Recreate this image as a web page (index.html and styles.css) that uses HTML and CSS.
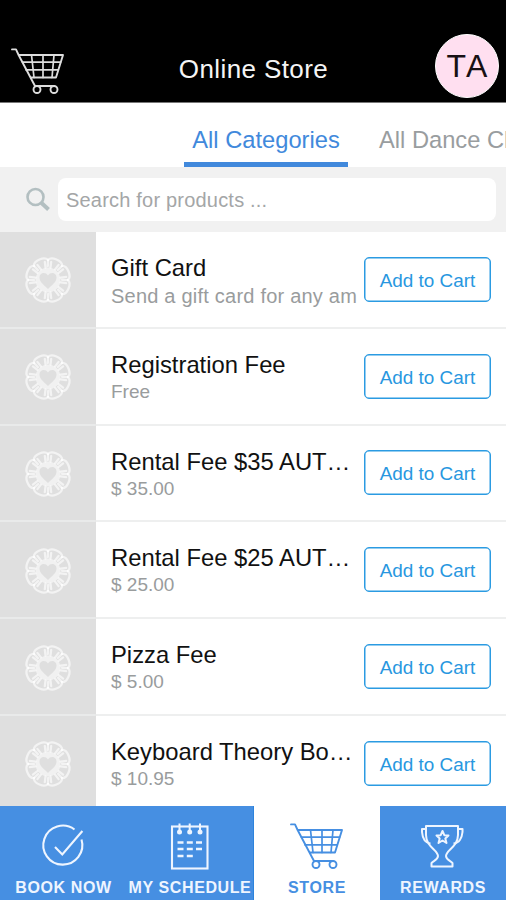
FILE: index.html
```
<!DOCTYPE html>
<html lang="en">
<head>
<meta charset="utf-8">
<title>Online Store</title>
<link rel="stylesheet" href="styles.css">
</head>
<body>
<svg class="defs" width="0" height="0">
  <defs>
    <g id="cart" fill="none" stroke="currentColor" stroke-linecap="round" stroke-linejoin="round">
      <path stroke-width="1.9" d="M1 1.4H5L7.6 7H52L45 29.5H20M7.6 7L24 38H43"/>
      <path stroke-width="1.7" d="M11.5 14.2H49.5M15 21.8H47M20.5 7L23 29.5M32 7V29.5M43 7L41 29.5"/>
      <circle cx="26" cy="41.500" r="3.5" stroke-width="1.9"/>
      <circle cx="43" cy="41.500" r="3.5" stroke-width="1.9"/>
    </g>
    <g id="petal">
      <path d="M-7.6 -18.4C-6 -23.500 6 -23.500 7.600 -18.400"/>
      <path d="M-2.500 -12.500L-4 -18M2.500 -12.500L4 -18M7.400 -17.800L5.200 -13"/>
    </g>
    <g id="rosette" fill="none" stroke="#fff" stroke-width="2.3" stroke-opacity=".62" stroke-linecap="round">
      <g transform="rotate(22.5)"><use href="#petal"/><use href="#petal" transform="rotate(45)"/><use href="#petal" transform="rotate(90)"/><use href="#petal" transform="rotate(135)"/><use href="#petal" transform="rotate(180)"/><use href="#petal" transform="rotate(225)"/><use href="#petal" transform="rotate(270)"/><use href="#petal" transform="rotate(315)"/></g>
      <path fill="#fff" fill-opacity=".55" fill-rule="evenodd" stroke="none" d="M0 -12.500A12.500 12.500 0 1 0 0 12.500A12.500 12.500 0 1 0 0 -12.500ZM0 9C-3 5.500 -8.500 2.500 -8.500 -2.500C-8.500 -7.500 -2.500 -8.500 0 -4.500C2.500 -8.500 8.500 -7.500 8.500 -2.500C8.500 2.500 3 5.500 0 9Z"/>
    </g>
  </defs>
</svg>
<div class="app">
  <header class="header">
    <svg class="header-cart" width="54" height="46"><use href="#cart"/></svg>
    <h1 class="title">Online Store</h1>
    <div class="avatar">TA</div>
  </header>
  <nav class="tabs">
    <a class="tab tab-active">All Categories</a>
    <a class="tab tab-next">All Dance Cl</a>
  </nav>
  <div class="search">
    <svg class="search-icon" width="26" height="26" fill="none" stroke="#b3bfc1"><circle cx="10.5" cy="10" r="8" stroke-width="2.6"/><path d="M16 15.5L23.5 22.5" stroke-width="4"/></svg>
    <div class="field">Search for products ...</div>
  </div>
  <main class="list">
    <article class="row"><div class="thumb"><svg width="50" height="50" viewBox="-25 -25 50 50"><use href="#rosette"/></svg></div><div class="info"><h2 class="name">Gift Card</h2><p class="sub desc">Send a gift card for any am</p></div><button class="add">Add to Cart</button></article>
    <article class="row"><div class="thumb"><svg width="50" height="50" viewBox="-25 -25 50 50"><use href="#rosette"/></svg></div><div class="info"><h2 class="name">Registration Fee</h2><p class="sub">Free</p></div><button class="add">Add to Cart</button></article>
    <article class="row"><div class="thumb"><svg width="50" height="50" viewBox="-25 -25 50 50"><use href="#rosette"/></svg></div><div class="info"><h2 class="name">Rental Fee $35 AUT…</h2><p class="sub">$ 35.00</p></div><button class="add">Add to Cart</button></article>
    <article class="row"><div class="thumb"><svg width="50" height="50" viewBox="-25 -25 50 50"><use href="#rosette"/></svg></div><div class="info"><h2 class="name">Rental Fee $25 AUT…</h2><p class="sub">$ 25.00</p></div><button class="add">Add to Cart</button></article>
    <article class="row"><div class="thumb"><svg width="50" height="50" viewBox="-25 -25 50 50"><use href="#rosette"/></svg></div><div class="info"><h2 class="name">Pizza Fee</h2><p class="sub">$ 5.00</p></div><button class="add">Add to Cart</button></article>
    <article class="row"><div class="thumb"><svg width="50" height="50" viewBox="-25 -25 50 50"><use href="#rosette"/></svg></div><div class="info"><h2 class="name">Keyboard Theory Bo…</h2><p class="sub">$ 10.95</p></div><button class="add">Add to Cart</button></article>
  </main>
  <footer class="bar">
    <a class="item"><svg class="icon" width="54" height="48" fill="none" stroke="currentColor" stroke-width="2.1"><path d="M37.500 7.500A19.500 19.500 0 1 0 44.500 17.500M18 25L25.300 32.500L45.400 9"/></svg><span class="label">BOOK NOW</span></a>
    <a class="item item-schedule"><svg class="icon" width="54" height="48" fill="none" stroke="currentColor"><rect x="9" y="4.500" width="35.5" height="42" stroke-width="2.100"/><path stroke-width="2" d="M16.500 1.500V10M26.700 1.500V10M37 1.500V10"/><g fill="currentColor" stroke="none"><circle cx="16.500" cy="10" r="2.5"/><circle cx="26.700" cy="10" r="2.5"/><circle cx="37" cy="10" r="2.5"/></g><path stroke-width="2.4" d="M14.500 20.500H20.500M23.800 20.500H29.800M33 20.500H39M14.500 27H20.500M23.800 27H29.800M33 27H39M14.500 34H20.500M23.800 34H29.800"/></svg><span class="label">MY SCHEDULE</span></a>
    <a class="item item-active"><svg class="icon" width="54" height="48" viewBox="0 -1 54 48"><use href="#cart"/></svg><span class="label">STORE</span></a>
    <a class="item"><svg class="icon" width="54" height="48" fill="none" stroke="currentColor" stroke-width="2" stroke-linejoin="round"><path d="M10 4H42V13C42 25 30 28 30 34C30 38 35 39 36.500 41V44.500H15.500V41C17 39 22 38 22 34C22 28 10 25 10 13Z"/><path d="M10 7H6V10C6.500 16 9 21 14.500 21.500M42 7H46.500V10C46 16 43 21 37.500 21.500"/><path d="M26.500 9L28.300 13.200L32.500 13.500L29.300 16.500L30.500 21L26.500 18.500L22.500 21L23.700 16.500L20.500 13.500L24.700 13.200Z"/></svg><span class="label">REWARDS</span></a>
  </footer>
</div>
</body>
</html>
```
FILE: styles.css
```
* { box-sizing: border-box; }
body { margin: 0; background: #fff; font-family: "Liberation Sans", Arial, sans-serif; }
.defs { position: absolute; }
.app { width: 506px; height: 900px; overflow: hidden; display: flex; flex-direction: column; }
.header { flex: none; height: 103px; background: #000; color: #f5f5f5; border-bottom: 1px solid #777; display: grid; grid-template-columns: 100px 1fr 100px; padding: 34px 7px 0 11px; }
.header-cart { margin-top: 14px; color: #ddd; }
.title { margin: 20px 3px 0 0; font-size: 26px; line-height: 30px; font-weight: 400; letter-spacing: .4px; text-align: center; white-space: nowrap; }
.avatar { justify-self: end; width: 64px; height: 64px; border: 1px solid #fff; border-radius: 50%; background: #ffdff0; color: #181014; font-size: 32px; line-height: 63px; text-align: center; font-kerning: none; }
.tabs { flex: none; height: 64px; display: flex; padding-left: 184px; overflow: hidden; }
.tab { flex: none; font-size: 23.7px; line-height: 28px; padding-top: 23px; white-space: nowrap; color: #999d9f; }
.tab-active { width: 164px; text-align: center; color: #4189dc; border-bottom: 5px solid #4189dc; }
.tab-next { margin-left: 31px; }
.search { flex: none; height: 65px; background: #f1f1f1; display: flex; align-items: flex-start; padding: 11px 10px 0 25px; }
.search-icon { flex: none; margin: 9px 7px 0 0; }
.field { flex: 1; height: 43px; border-radius: 8px; background: #fff; color: #a4a6a7; font-size: 20px; line-height: 44px; padding-left: 8px; letter-spacing: .2px; }
.list { flex: 1; min-height: 0; overflow: hidden; }
.row { height: 96.8px; display: flex; align-items: stretch; background: linear-gradient(#eeefef, #eeefef) bottom / 100% 2px no-repeat; }
.thumb { flex: none; width: 95.5px; background: linear-gradient(#e9eaea, #e9eaea) bottom / 100% 2px no-repeat #dfdfdf; display: flex; align-items: center; justify-content: center; }
.info { flex: none; width: 262px; padding: 22px 0 0 15.5px; overflow: hidden; white-space: nowrap; }
.name { margin: 0; font-size: 23.8px; line-height: 28px; font-weight: 400; color: #111; }
.sub { margin: 0; font-size: 19px; line-height: 26px; color: #999c9d; }
.desc { font-size: 20px; line-height: 28px; letter-spacing: .22px; }
.add { align-self: center; margin: 0 0 2px 6.500px; width: 127px; height: 45px; padding: 2px 0 0; border: 1px solid #2b9be2; border-radius: 5px; box-shadow: inset 0 0 0 .5px #2b9be2; background: #fff; color: #2897df; font-family: inherit; font-size: 18.9px; line-height: 41px; text-align: center; white-space: nowrap; }
.bar { flex: none; height: 94.500px; display: grid; grid-template-columns: 127px 127px 126px 126px; background: #468fe2; color: #eef5ff; }
.item { display: flex; flex-direction: column; align-items: center; padding-top: 16px; }
.item-schedule { border-right: 1px solid #2d83dc; }
.item-active { background: #fff; color: #468fe2; }
.icon { flex: none; }
.label { margin-top: 8px; font-size: 16px; line-height: 20px; font-weight: 700; letter-spacing: .6px; white-space: nowrap; }
```
